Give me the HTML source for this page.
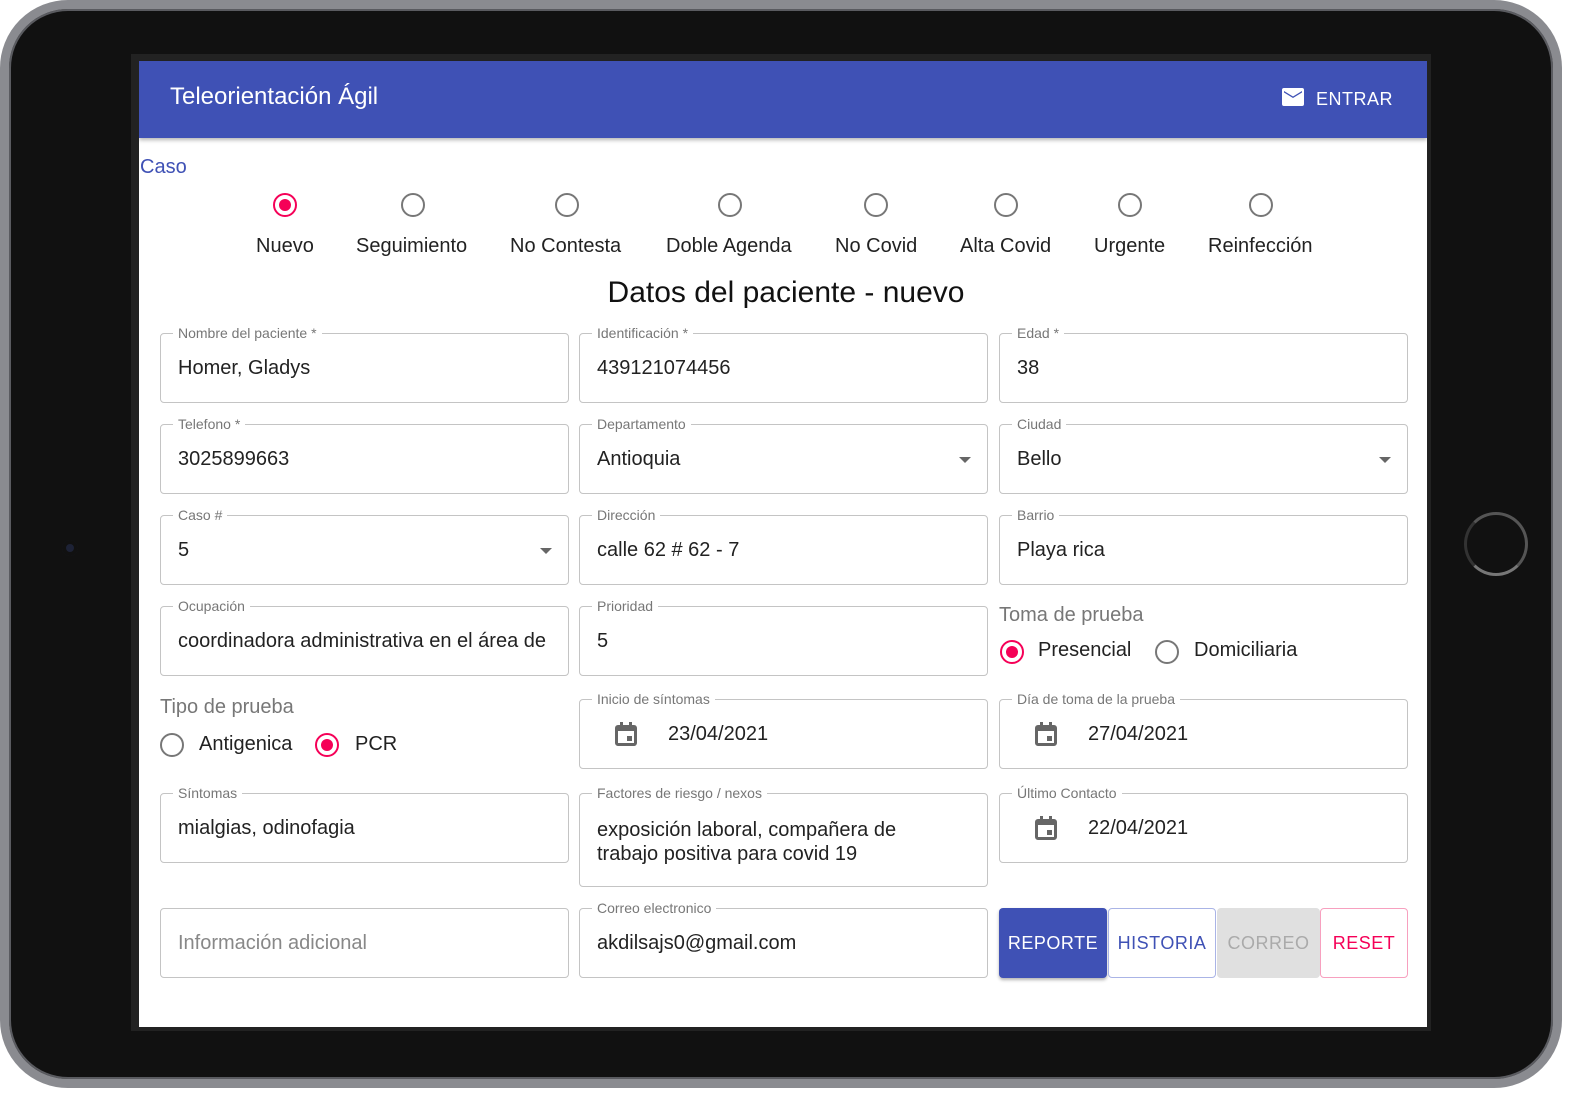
<!DOCTYPE html>
<html><head><meta charset="utf-8">
<style>
*{box-sizing:border-box;margin:0;padding:0}
body{width:1586px;height:1098px;background:#fff;position:relative;overflow:hidden;font-family:"Liberation Sans",sans-serif;}
.dev{position:absolute;left:0;top:0;width:1562px;height:1088px;border-radius:68px;background:#111;border:9px solid #8a8b90;box-shadow:inset 0 0 0 2px #5a5b60;}
.bez{position:absolute;left:131px;top:54px;width:1300px;height:977px;background:#222;}
.scr{position:absolute;left:139px;top:61px;width:1288px;height:966px;background:#fff;overflow:hidden}
.hdr{position:absolute;left:0;top:0;width:100%;height:77px;background:#3f51b5;box-shadow:0 2px 4px rgba(0,0,0,.3);color:#fff}
.a{position:absolute}
.f{position:absolute;border:1px solid #c4c4c4;border-radius:4px;height:70px;width:409px}
.l{position:absolute;top:-9px;left:12px;padding:0 5px;background:#fff;font-size:14px;color:#777;line-height:16px;white-space:nowrap}
.v{position:absolute;left:17px;top:23px;font-size:20px;color:#222;white-space:nowrap;overflow:hidden;right:16px}
.dd{position:absolute;right:16px;top:32px;width:0;height:0;border-left:6px solid transparent;border-right:6px solid transparent;border-top:6px solid #666}
.r{position:absolute;width:24px;height:24px;border:2px solid #777;border-radius:50%}
.r.on{border-color:#f50057}
.r.on:after{content:"";position:absolute;left:4px;top:4px;width:12px;height:12px;border-radius:50%;background:#f50057}
.rl{position:absolute;font-size:20px;color:#222;white-space:nowrap}
.cal{position:absolute;left:35px;top:22px}
.btn{position:absolute;top:908px;height:70px;font-size:18px;display:flex;align-items:center;justify-content:center;border-radius:4px;letter-spacing:.5px}
</style></head><body>
<div class="dev"></div>
<div class="a" style="left:62px;top:540px;width:16px;height:16px;border-radius:50%;background:#1d2236;box-shadow:inset 0 0 0 4px #111"></div>
<div class="a" style="left:1464px;top:512px;width:64px;height:64px;border-radius:50%;border:3px solid #555;border-left-color:#333;border-bottom-color:#777"></div>
<div class="bez"></div>
<div class="scr">
 <div class="hdr">
  <div class="a" style="left:31px;top:22px;font-size:24px">Teleorientación Ágil</div>
  <svg class="a" style="left:1143px;top:27px" width="22" height="18" viewBox="0 0 22 18"><path d="M2 0h18a2 2 0 0 1 2 2v14a2 2 0 0 1-2 2H2a2 2 0 0 1-2-2V2a2 2 0 0 1 2-2zm0 3v1.5l9 5.5 9-5.5V3l-9 5.5z" fill="#fff"/></svg>
  <div class="a" style="left:1177px;top:28px;font-size:18px;letter-spacing:.5px">ENTRAR</div>
 </div>
</div>
<div class="a" style="left:140px;top:156px;font-size:20px;color:#3f51b5">Caso</div>

<div class="r on" style="left:273px;top:193px"></div><div class="rl" style="left:256px;top:235px">Nuevo</div>
<div class="r" style="left:401px;top:193px"></div><div class="rl" style="left:356px;top:235px">Seguimiento</div>
<div class="r" style="left:555px;top:193px"></div><div class="rl" style="left:510px;top:235px">No Contesta</div>
<div class="r" style="left:718px;top:193px"></div><div class="rl" style="left:666px;top:235px">Doble Agenda</div>
<div class="r" style="left:864px;top:193px"></div><div class="rl" style="left:835px;top:235px">No Covid</div>
<div class="r" style="left:994px;top:193px"></div><div class="rl" style="left:960px;top:235px">Alta Covid</div>
<div class="r" style="left:1118px;top:193px"></div><div class="rl" style="left:1094px;top:235px">Urgente</div>
<div class="r" style="left:1249px;top:193px"></div><div class="rl" style="left:1208px;top:235px">Reinfección</div>

<div class="a" style="left:0;width:1572px;text-align:center;top:276px;font-size:30px;color:#111">Datos del paciente - nuevo</div>

<div class="f" style="left:160px;top:333px"><div class="l">Nombre del paciente *</div><div class="v">Homer, Gladys</div></div>
<div class="f" style="left:579px;top:333px"><div class="l">Identificación *</div><div class="v">439121074456</div></div>
<div class="f" style="left:999px;top:333px"><div class="l">Edad *</div><div class="v">38</div></div>

<div class="f" style="left:160px;top:424px"><div class="l">Telefono *</div><div class="v">3025899663</div></div>
<div class="f" style="left:579px;top:424px"><div class="l">Departamento</div><div class="v">Antioquia</div><div class="dd"></div></div>
<div class="f" style="left:999px;top:424px"><div class="l">Ciudad</div><div class="v">Bello</div><div class="dd"></div></div>

<div class="f" style="left:160px;top:515px"><div class="l">Caso #</div><div class="v">5</div><div class="dd"></div></div>
<div class="f" style="left:579px;top:515px"><div class="l">Dirección</div><div class="v">calle 62 # 62 - 7</div></div>
<div class="f" style="left:999px;top:515px"><div class="l">Barrio</div><div class="v">Playa rica</div></div>

<div class="f" style="left:160px;top:606px"><div class="l">Ocupación</div><div class="v">coordinadora administrativa en el área de salud</div></div>
<div class="f" style="left:579px;top:606px"><div class="l">Prioridad</div><div class="v">5</div></div>
<div class="a" style="left:999px;top:604px;font-size:20px;color:#777">Toma de prueba</div>
<div class="r on" style="left:1000px;top:640px"></div><div class="rl" style="left:1038px;top:639px">Presencial</div>
<div class="r" style="left:1155px;top:640px"></div><div class="rl" style="left:1194px;top:639px">Domiciliaria</div>

<div class="a" style="left:160px;top:696px;font-size:20px;color:#777">Tipo de prueba</div>
<div class="r" style="left:160px;top:733px"></div><div class="rl" style="left:199px;top:733px">Antigenica</div>
<div class="r on" style="left:315px;top:733px"></div><div class="rl" style="left:355px;top:733px">PCR</div>

<div class="f" style="left:579px;top:699px"><div class="l">Inicio de síntomas</div>
 <svg class="cal" width="22" height="24" viewBox="0 0 22 24"><path d="M3 3h2V0h3v3h6V0h3v3h2a3 3 0 0 1 3 3v15a3 3 0 0 1-3 3H3a3 3 0 0 1-3-3V6a3 3 0 0 1 3-3zm0 6v12h16V9zm9 5h5v5h-5z" fill="#666"/></svg>
 <div class="v" style="left:88px">23/04/2021</div></div>
<div class="f" style="left:999px;top:699px"><div class="l">Día de toma de la prueba</div>
 <svg class="cal" width="22" height="24" viewBox="0 0 22 24"><path d="M3 3h2V0h3v3h6V0h3v3h2a3 3 0 0 1 3 3v15a3 3 0 0 1-3 3H3a3 3 0 0 1-3-3V6a3 3 0 0 1 3-3zm0 6v12h16V9zm9 5h5v5h-5z" fill="#666"/></svg>
 <div class="v" style="left:88px">27/04/2021</div></div>

<div class="f" style="left:160px;top:793px"><div class="l">Síntomas</div><div class="v">mialgias, odinofagia</div></div>
<div class="f" style="left:579px;top:793px;height:94px"><div class="l">Factores de riesgo / nexos</div><div class="v" style="top:24px;white-space:normal;line-height:24px;right:auto;width:320px">exposición laboral, compañera de trabajo positiva para covid 19</div></div>
<div class="f" style="left:999px;top:793px"><div class="l">Último Contacto</div>
 <svg class="cal" width="22" height="24" viewBox="0 0 22 24"><path d="M3 3h2V0h3v3h6V0h3v3h2a3 3 0 0 1 3 3v15a3 3 0 0 1-3 3H3a3 3 0 0 1-3-3V6a3 3 0 0 1 3-3zm0 6v12h16V9zm9 5h5v5h-5z" fill="#666"/></svg>
 <div class="v" style="left:88px">22/04/2021</div></div>

<div class="f" style="left:160px;top:908px"><div class="v" style="color:#888">Información adicional</div></div>
<div class="f" style="left:579px;top:908px"><div class="l">Correo electronico</div><div class="v">akdilsajs0@gmail.com</div></div>

<div class="btn" style="left:999px;width:108px;background:#3f51b5;color:#fff;box-shadow:0 2px 3px rgba(0,0,0,.3)">REPORTE</div>
<div class="btn" style="left:1108px;width:108px;border:1px solid #aab4e6;color:#3f51b5;background:#fff">HISTORIA</div>
<div class="btn" style="left:1217px;width:103px;background:#e0e0e0;color:#aaa">CORREO</div>
<div class="btn" style="left:1320px;width:88px;border:1px solid #f7a0bf;color:#f50057;background:#fff">RESET</div>
</body></html>
